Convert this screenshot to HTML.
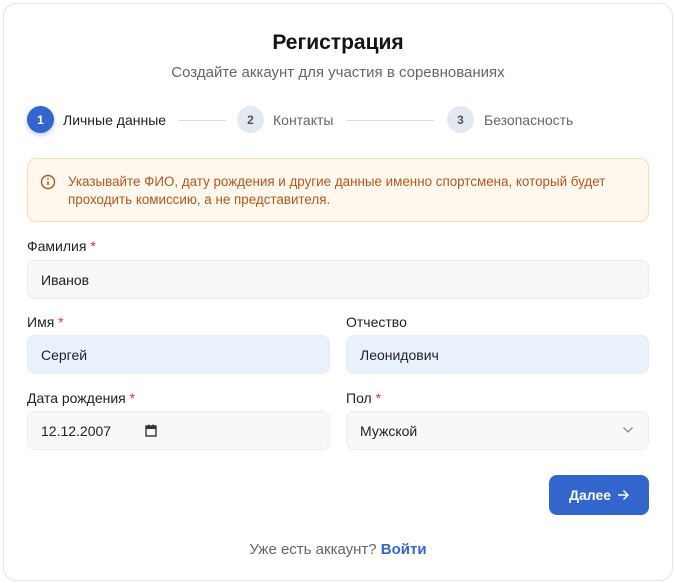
<!DOCTYPE html><html><head><meta charset="utf-8"><style>
*{box-sizing:border-box;margin:0;padding:0}
body{width:676px;height:583px;background:#fff;font-family:"Liberation Sans",sans-serif;position:relative;overflow:hidden;color:#1a1a1a}
.card{position:absolute;left:3px;top:3px;width:670px;height:578px;border:1px solid #e3e4e8;border-radius:13px;background:#fff}
.a{position:absolute;white-space:nowrap}
.c{position:absolute;width:27px;height:27px;border-radius:50%;font-size:12px;font-weight:bold;display:flex;align-items:center;justify-content:center}
.ln{position:absolute;height:1px;background:#dcdfe5;top:120px}
.lab{position:absolute;font-size:14px;color:#222}
.lab b{color:#e03131;font-weight:normal}
.in{position:absolute;height:39px;border:1px solid #ececec;border-radius:8px;background:#f8f8f8;font-size:14px;padding-left:13px;display:flex;align-items:center;color:#222}
.bl{background:#e9f1fd;border-color:#e4ecf8}
</style></head><body>
<div class="card"></div>
<div class="a" style="left:0;width:676px;text-align:center;top:31px;font-size:21px;font-weight:bold;color:#141414">Регистрация</div>
<div class="a" style="left:0;width:676px;text-align:center;top:64px;font-size:15px;color:#666">Создайте аккаунт для участия в соревнованиях</div>
<div class="c" style="left:27px;top:106px;background:#3366cc;color:#fff;box-shadow:0 2px 5px rgba(51,102,204,.35)">1</div>
<div class="a" style="left:63px;top:112px;font-size:14px;color:#222">Личные данные</div>
<div class="ln" style="left:178px;width:48px"></div>
<div class="c" style="left:237px;top:106px;background:#e3e9f1;color:#555">2</div>
<div class="a" style="left:273px;top:112px;font-size:14px;color:#666">Контакты</div>
<div class="ln" style="left:346px;width:88px"></div>
<div class="c" style="left:447px;top:106px;background:#e3e9f1;color:#555">3</div>
<div class="a" style="left:484px;top:112px;font-size:14px;color:#666">Безопасность</div>
<div class="a" style="left:27px;top:158px;width:622px;height:64px;background:#fff8ef;border:1px solid #fbdca6;border-radius:9px"></div>
<svg class="a" style="left:40px;top:174px" width="16" height="16" viewBox="0 0 16 16"><circle cx="8" cy="8" r="6.5" fill="none" stroke="#b5561a" stroke-width="1.4"/><line x1="8" y1="7.3" x2="8" y2="11" stroke="#b5561a" stroke-width="1.5"/><circle cx="8" cy="5" r=".9" fill="#b5561a"/></svg>
<div class="a" style="left:68px;top:173px;font-size:13.4px;color:#b5561a;line-height:18px">Указывайте ФИО, дату рождения и другие данные именно спортсмена, который будет<br>проходить комиссию, а не представителя.</div>
<div class="lab" style="left:27px;top:238px">Фамилия <b>*</b></div>
<div class="in" style="left:27px;top:260px;width:622px">Иванов</div>
<div class="lab" style="left:27px;top:314px">Имя <b>*</b></div>
<div class="in bl" style="left:27px;top:335px;width:303px">Сергей</div>
<div class="lab" style="left:346px;top:314px">Отчество</div>
<div class="in bl" style="left:346px;top:335px;width:303px">Леонидович</div>
<div class="lab" style="left:27px;top:390px">Дата рождения <b>*</b></div>
<div class="in" style="left:27px;top:411px;width:303px">12.12.2007</div>
<svg class="a" style="left:145px;top:424px" width="12" height="13" viewBox="0 0 12 13"><rect x="1" y="2" width="10" height="10" fill="none" stroke="#333" stroke-width="1.4"/><rect x="1" y="2" width="10" height="3" fill="#333"/><rect x="3" y="0.5" width="1.4" height="2.5" fill="#333"/><rect x="7.6" y="0.5" width="1.4" height="2.5" fill="#333"/></svg>
<div class="lab" style="left:346px;top:390px">Пол <b>*</b></div>
<div class="in" style="left:346px;top:411px;width:303px">Мужской</div>
<svg class="a" style="left:622px;top:426px" width="12" height="8" viewBox="0 0 12 8"><path d="M1.5 1.5l4.5 4.5 4.5-4.5" fill="none" stroke="#888" stroke-width="1.3"/></svg>
<div class="a" style="left:549px;top:475px;width:100px;height:40px;background:#3366cc;border-radius:8px;color:#fff;font-size:14px;font-weight:bold;display:flex;align-items:center;justify-content:center;gap:6px">Далее <svg width="12" height="12" viewBox="0 0 12 12"><path d="M1 6h10M6.5 1.5L11 6l-4.5 4.5" fill="none" stroke="#fff" stroke-width="1.5"/></svg></div>
<div class="a" style="left:0;width:676px;text-align:center;top:541px;font-size:15px;color:#666">Уже есть аккаунт? <b style="color:#3366cc">Войти</b></div>
</body></html>
